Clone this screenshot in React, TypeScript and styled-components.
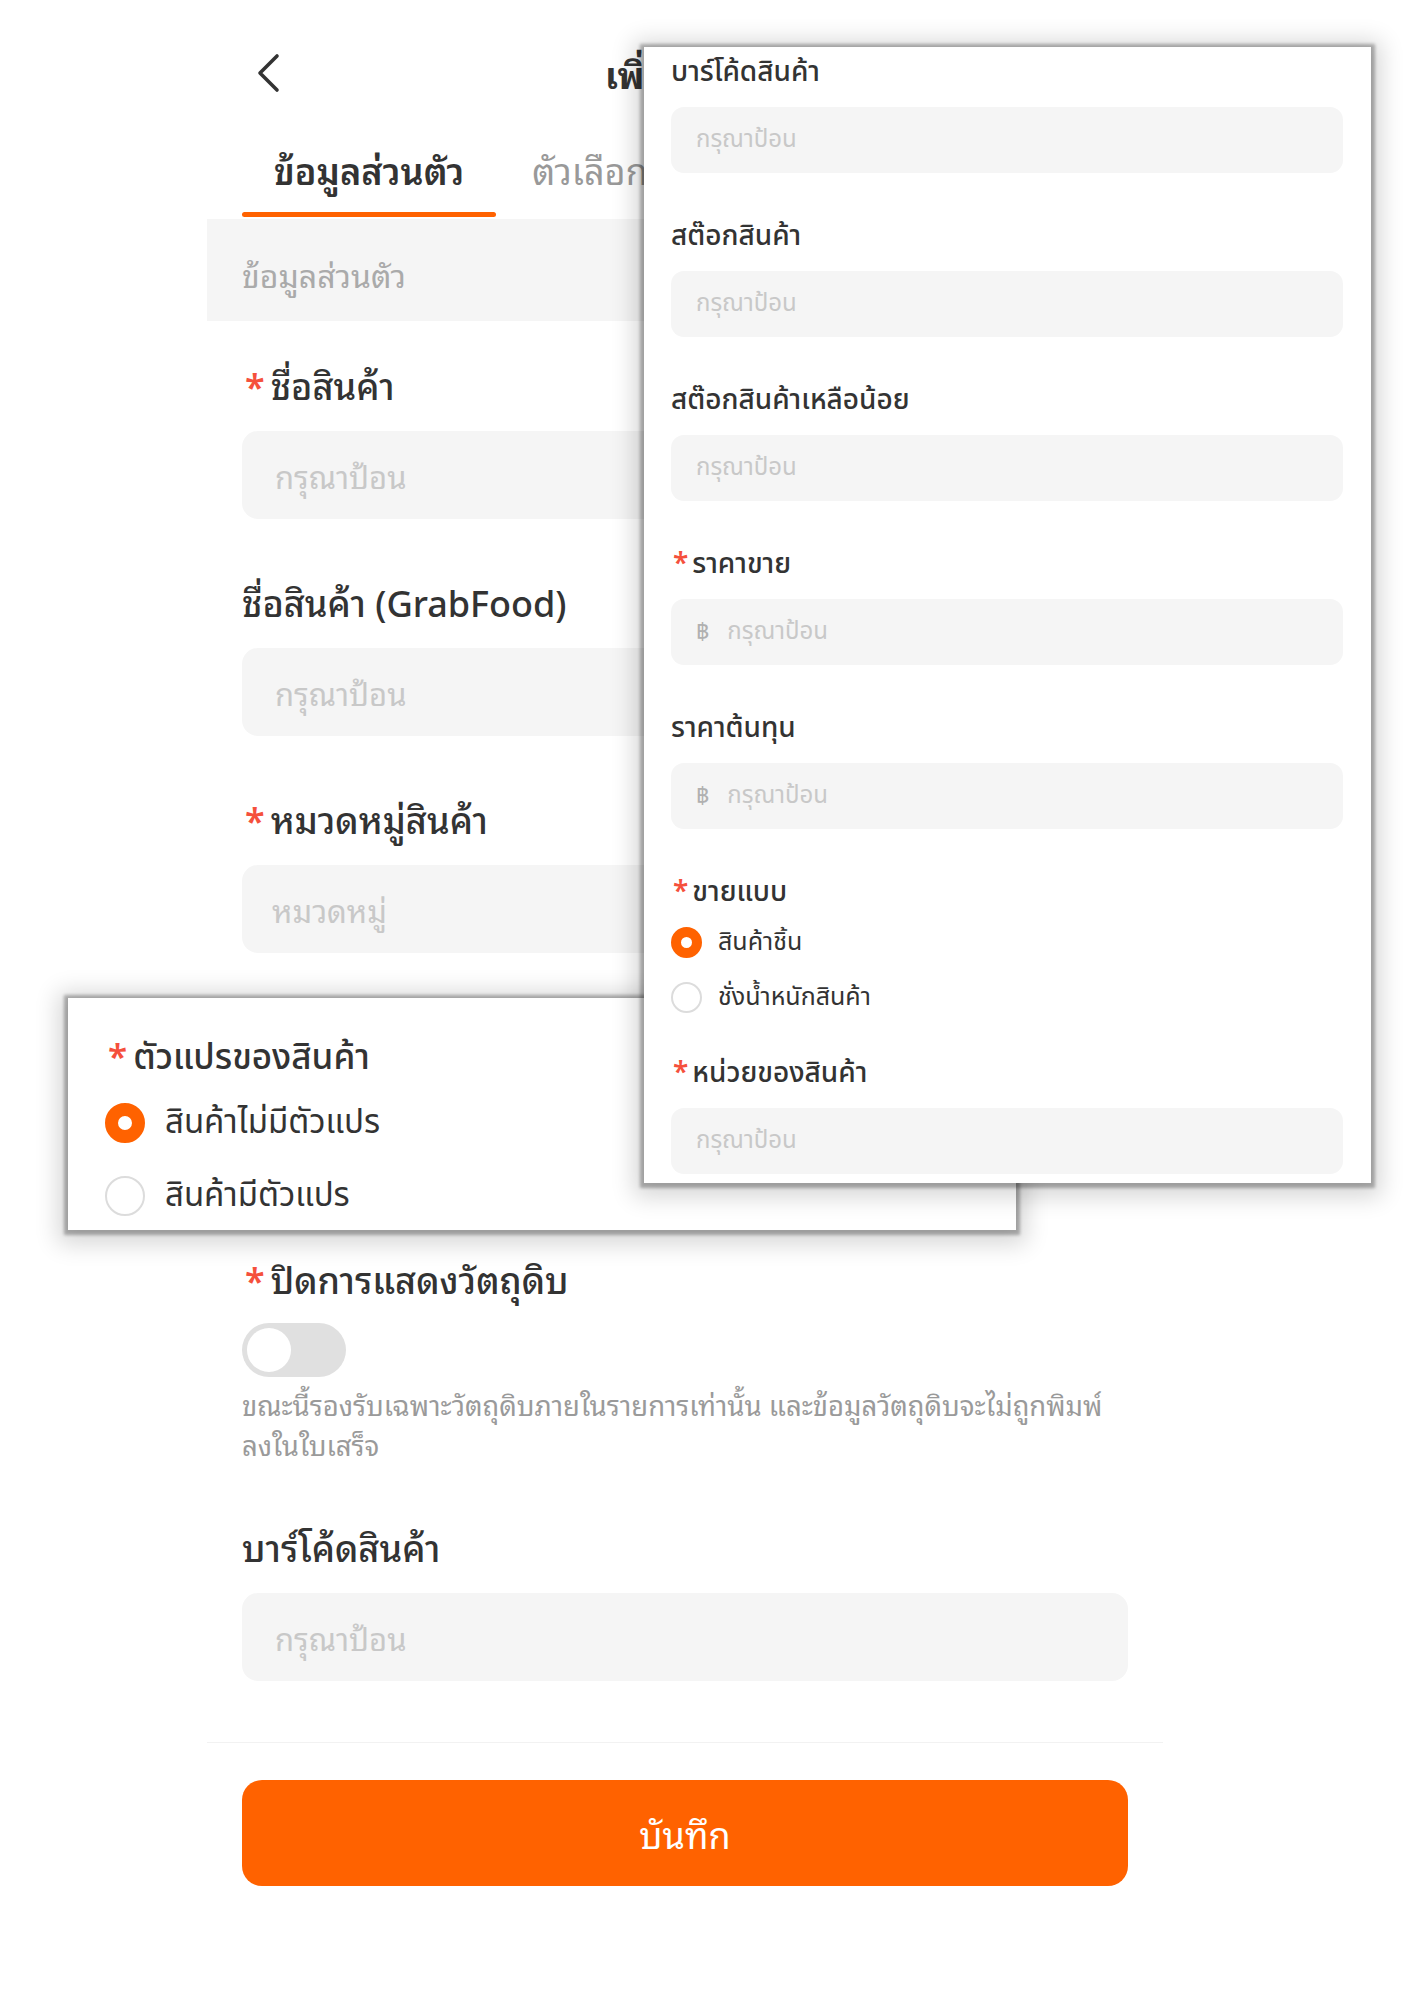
import React from 'react';
import styled, { createGlobalStyle } from 'styled-components';

const GlobalStyle = createGlobalStyle`
  html, body { margin: 0; padding: 0; background: #fff; }
  body { font-family: "Noto Sans Thai Looped", "Noto Sans Thai", "Noto Sans", sans-serif; color: #333; }
`;

const ORANGE = '#ff6200';
const STAR = '#f5503c';

const Page = styled.div`
  position: relative;
  width: 1414px;
  height: 2000px;
  background: #fff;
  overflow: hidden;
`;

const Screen = styled.div`
  margin-left: 207px;
  width: 956px;
  display: flex;
  flex-direction: column;
  background: #fff;
`;

const Header = styled.div`
  height: 146px;
  display: grid;
  grid-template-columns: 1fr auto 1fr;
  align-items: center;
  padding: 0 48px;
`;

const Back = styled.div`
  display: flex;
  align-items: center;
`;

const Title = styled.div`
  font-size: 36px;
  font-weight: 700;
  color: #333;
  margin-right: 12px;
`;

const Tabs = styled.div`
  height: 73px;
  display: flex;
  gap: 4px;
  padding-left: 35px;
`;

const Tab = styled.div<{ $active?: boolean }>`
  position: relative;
  padding: 0 32px;
  font-size: 36px;
  line-height: 46px;
  font-weight: ${p => (p.$active ? 600 : 400)};
  color: ${p => (p.$active ? '#333' : '#999')};
  &::after {
    content: '';
    display: ${p => (p.$active ? 'block' : 'none')};
    position: absolute;
    left: 0;
    right: 0;
    bottom: 2px;
    height: 5px;
    border-radius: 3px;
    background: ${ORANGE};
  }
`;

const Band = styled.div`
  height: 102px;
  box-sizing: border-box;
  padding: 6px 0 0 35px;
  background: #f5f5f5;
  display: flex;
  align-items: center;
  font-size: 32px;
  color: #aaa;
`;

const Form = styled.div`
  display: flex;
  flex-direction: column;
  gap: 59px;
  padding: 40px 35px 61px;
`;

const Field = styled.div<{ $gap?: number }>`
  display: flex;
  flex-direction: column;
  gap: ${p => p.$gap ?? 24}px;
`;

const Label = styled.div<{ $size?: number; $lh?: number }>`
  font-size: ${p => p.$size ?? 36}px;
  line-height: ${p => p.$lh ?? 46}px;
  font-weight: 500;
  color: #333;
  white-space: nowrap;
  display: flex;
  align-items: center;
`;

const Star = styled.span<{ $gap?: number }>`
  color: ${STAR};
  font-weight: 600;
  margin: 0 ${p => p.$gap ?? 6}px 0 ${p => Math.round((p.$gap ?? 6) / 2)}px;
`;

const Input = styled.div<{ $h?: number; $size?: number; $pad?: number; $r?: number }>`
  height: ${p => p.$h ?? 88}px;
  border-radius: ${p => p.$r ?? 16}px;
  background: #f5f5f5;
  display: flex;
  align-items: center;
  gap: 18px;
  padding-left: ${p => p.$pad ?? 33}px;
  font-size: ${p => p.$size ?? 31}px;
  color: #c8c8c8;
`;

const Baht = styled.span`
  color: #b0b0b0;
  font-size: 0.95em;
`;

const RadioGroup = styled.div<{ $gap: number }>`
  display: flex;
  flex-direction: column;
  gap: ${p => p.$gap}px;
`;

const RadioRow = styled.div<{ $size: number; $font: number; $h: number }>`
  display: flex;
  align-items: center;
  height: ${p => p.$h}px;
  gap: ${p => Math.round(p.$size * 0.5)}px;
  font-size: ${p => p.$font}px;
  color: #333;
`;

const RadioDot = styled.span<{ $on?: boolean; $size: number }>`
  box-sizing: border-box;
  width: ${p => p.$size}px;
  height: ${p => p.$size}px;
  border-radius: 50%;
  flex: none;
  background: #fff;
  border: ${p => (p.$on ? `${Math.round(p.$size * 0.32)}px solid ${ORANGE}` : '2px solid #dcdcdc')};
`;

const Toggle = styled.div`
  box-sizing: border-box;
  width: 104px;
  height: 54px;
  border-radius: 27px;
  background: #e0e0e0;
  padding: 5px;
  display: flex;
`;

const Knob = styled.span`
  width: 44px;
  height: 44px;
  border-radius: 50%;
  background: #fff;
`;

const Help = styled.div`
  margin-top: -15px;
  font-size: 27.5px;
  line-height: 40px;
  color: #9a9a9a;
  white-space: nowrap;
`;

const Divider = styled.div`
  height: 1px;
  background: #f2f2f2;
`;

const Footer = styled.div`
  padding: 37px 35px 0;
`;

const SaveButton = styled.div`
  height: 106px;
  border-radius: 20px;
  background: ${ORANGE};
  color: #fff;
  font-size: 36px;
  display: flex;
  align-items: center;
  justify-content: center;
`;

const VariantBase = styled.div`
  height: 184px;
`;

/* Callout panels that lie over the screen */
const Callout = styled.div<{ $left: number; $top: number; $w: number; $h: number }>`
  position: absolute;
  left: ${p => p.$left}px;
  top: ${p => p.$top}px;
  width: ${p => p.$w}px;
  height: ${p => p.$h}px;
  box-sizing: border-box;
  background: #fff;
  box-shadow: 0 1px 3px 4px rgba(0, 0, 0, 0.28), 0 4px 22px 10px rgba(0, 0, 0, 0.16);
  font-family: "Noto Sans Thai", "Noto Sans", sans-serif;
`;

const RightBody = styled.div`
  display: flex;
  flex-direction: column;
  padding: 8px 28px 0 27px;
`;

const PField = styled.div<{ $mb?: number; $gap?: number }>`
  display: flex;
  flex-direction: column;
  gap: ${p => p.$gap ?? 16}px;
  margin-bottom: ${p => p.$mb ?? 46}px;
`;

const LeftBody = styled.div`
  display: flex;
  flex-direction: column;
  padding: 38px 0 0 37px;
  gap: 13px;
`;

const ChevronLeft = () => (
  <svg width="28" height="40" viewBox="0 0 28 40" fill="none">
    <polyline points="22,3 5,20 22,37" stroke="#333" strokeWidth="3.6" strokeLinecap="round" strokeLinejoin="round" />
  </svg>
);

const Req = ({ children, gap }: { children: React.ReactNode; gap?: number }) => (
  <>
    <Star $gap={gap}>*</Star>
    {children}
  </>
);

export default function App() {
  return (
    <Page>
      <GlobalStyle />
      <Screen>
        <Header>
          <Back>
            <ChevronLeft />
          </Back>
          <Title>เพิ่มสินค้า</Title>
          <span />
        </Header>
        <Tabs>
          <Tab $active>ข้อมูลส่วนตัว</Tab>
          <Tab>ตัวเลือก</Tab>
        </Tabs>
        <Band>ข้อมูลส่วนตัว</Band>
        <Form>
          <Field>
            <Label>
              <Req>ชื่อสินค้า</Req>
            </Label>
            <Input>กรุณาป้อน</Input>
          </Field>
          <Field>
            <Label>ชื่อสินค้า (GrabFood)</Label>
            <Input>กรุณาป้อน</Input>
          </Field>
          <Field>
            <Label>
              <Req>หมวดหมู่สินค้า</Req>
            </Label>
            <Input $pad={30}>หมวดหมู่</Input>
          </Field>
          <VariantBase>
            <Field $gap={14}>
              <Label>
                <Req>ตัวแปรของสินค้า</Req>
              </Label>
              <RadioGroup $gap={12}>
                <RadioRow $size={40} $font={33} $h={56}>
                  <RadioDot $on $size={40} />
                  สินค้าไม่มีตัวแปร
                </RadioRow>
                <RadioRow $size={40} $font={33} $h={56}>
                  <RadioDot $size={40} />
                  สินค้ามีตัวแปร
                </RadioRow>
              </RadioGroup>
            </Field>
          </VariantBase>
          <Field $gap={22}>
            <Label>
              <Req>ปิดการแสดงวัตถุดิบ</Req>
            </Label>
            <Toggle>
              <Knob />
            </Toggle>
            <Help>
              ขณะนี้รองรับเฉพาะวัตถุดิบภายในรายการเท่านั้น และข้อมูลวัตถุดิบจะไม่ถูกพิมพ์
              <br />
              ลงในใบเสร็จ
            </Help>
          </Field>
          <Field>
            <Label>บาร์โค้ดสินค้า</Label>
            <Input>กรุณาป้อน</Input>
          </Field>
        </Form>
        <Divider />
        <Footer>
          <SaveButton>บันทึก</SaveButton>
        </Footer>
      </Screen>

      <Callout $left={68} $top={998} $w={948} $h={232}>
        <LeftBody>
          <Label $size={35} $lh={46}>
            <Req gap={6}>ตัวแปรของสินค้า</Req>
          </Label>
          <RadioGroup $gap={17}>
            <RadioRow $size={40} $font={33} $h={56}>
              <RadioDot $on $size={40} />
              สินค้าไม่มีตัวแปร
            </RadioRow>
            <RadioRow $size={40} $font={33} $h={56}>
              <RadioDot $size={40} />
              สินค้ามีตัวแปร
            </RadioRow>
          </RadioGroup>
        </LeftBody>
      </Callout>

      <Callout $left={644} $top={47} $w={727} $h={1136}>
        <RightBody>
          <PField>
            <Label $size={28} $lh={36}>บาร์โค้ดสินค้า</Label>
            <Input $h={66} $r={13} $size={24} $pad={25}>กรุณาป้อน</Input>
          </PField>
          <PField>
            <Label $size={28} $lh={36}>สต๊อกสินค้า</Label>
            <Input $h={66} $r={13} $size={24} $pad={25}>กรุณาป้อน</Input>
          </PField>
          <PField>
            <Label $size={28} $lh={36}>สต๊อกสินค้าเหลือน้อย</Label>
            <Input $h={66} $r={13} $size={24} $pad={25}>กรุณาป้อน</Input>
          </PField>
          <PField>
            <Label $size={28} $lh={36}>
              <Req gap={4}>ราคาขาย</Req>
            </Label>
            <Input $h={66} $r={13} $size={24} $pad={25}>
              <Baht>฿</Baht>กรุณาป้อน
            </Input>
          </PField>
          <PField>
            <Label $size={28} $lh={36}>ราคาต้นทุน</Label>
            <Input $h={66} $r={13} $size={24} $pad={25}>
              <Baht>฿</Baht>กรุณาป้อน
            </Input>
          </PField>
          <PField $mb={39} $gap={11}>
            <Label $size={28} $lh={36}>
              <Req gap={4}>ขายแบบ</Req>
            </Label>
            <RadioGroup $gap={15}>
              <RadioRow $size={31} $font={25} $h={40}>
                <RadioDot $on $size={31} />
                สินค้าชิ้น
              </RadioRow>
              <RadioRow $size={31} $font={25} $h={40}>
                <RadioDot $size={31} />
                ชั่งน้ำหนักสินค้า
              </RadioRow>
            </RadioGroup>
          </PField>
          <PField $mb={0} $gap={16}>
            <Label $size={28} $lh={36}>
              <Req gap={4}>หน่วยของสินค้า</Req>
            </Label>
            <Input $h={66} $r={13} $size={24} $pad={25}>กรุณาป้อน</Input>
          </PField>
        </RightBody>
      </Callout>
    </Page>
  );
}
